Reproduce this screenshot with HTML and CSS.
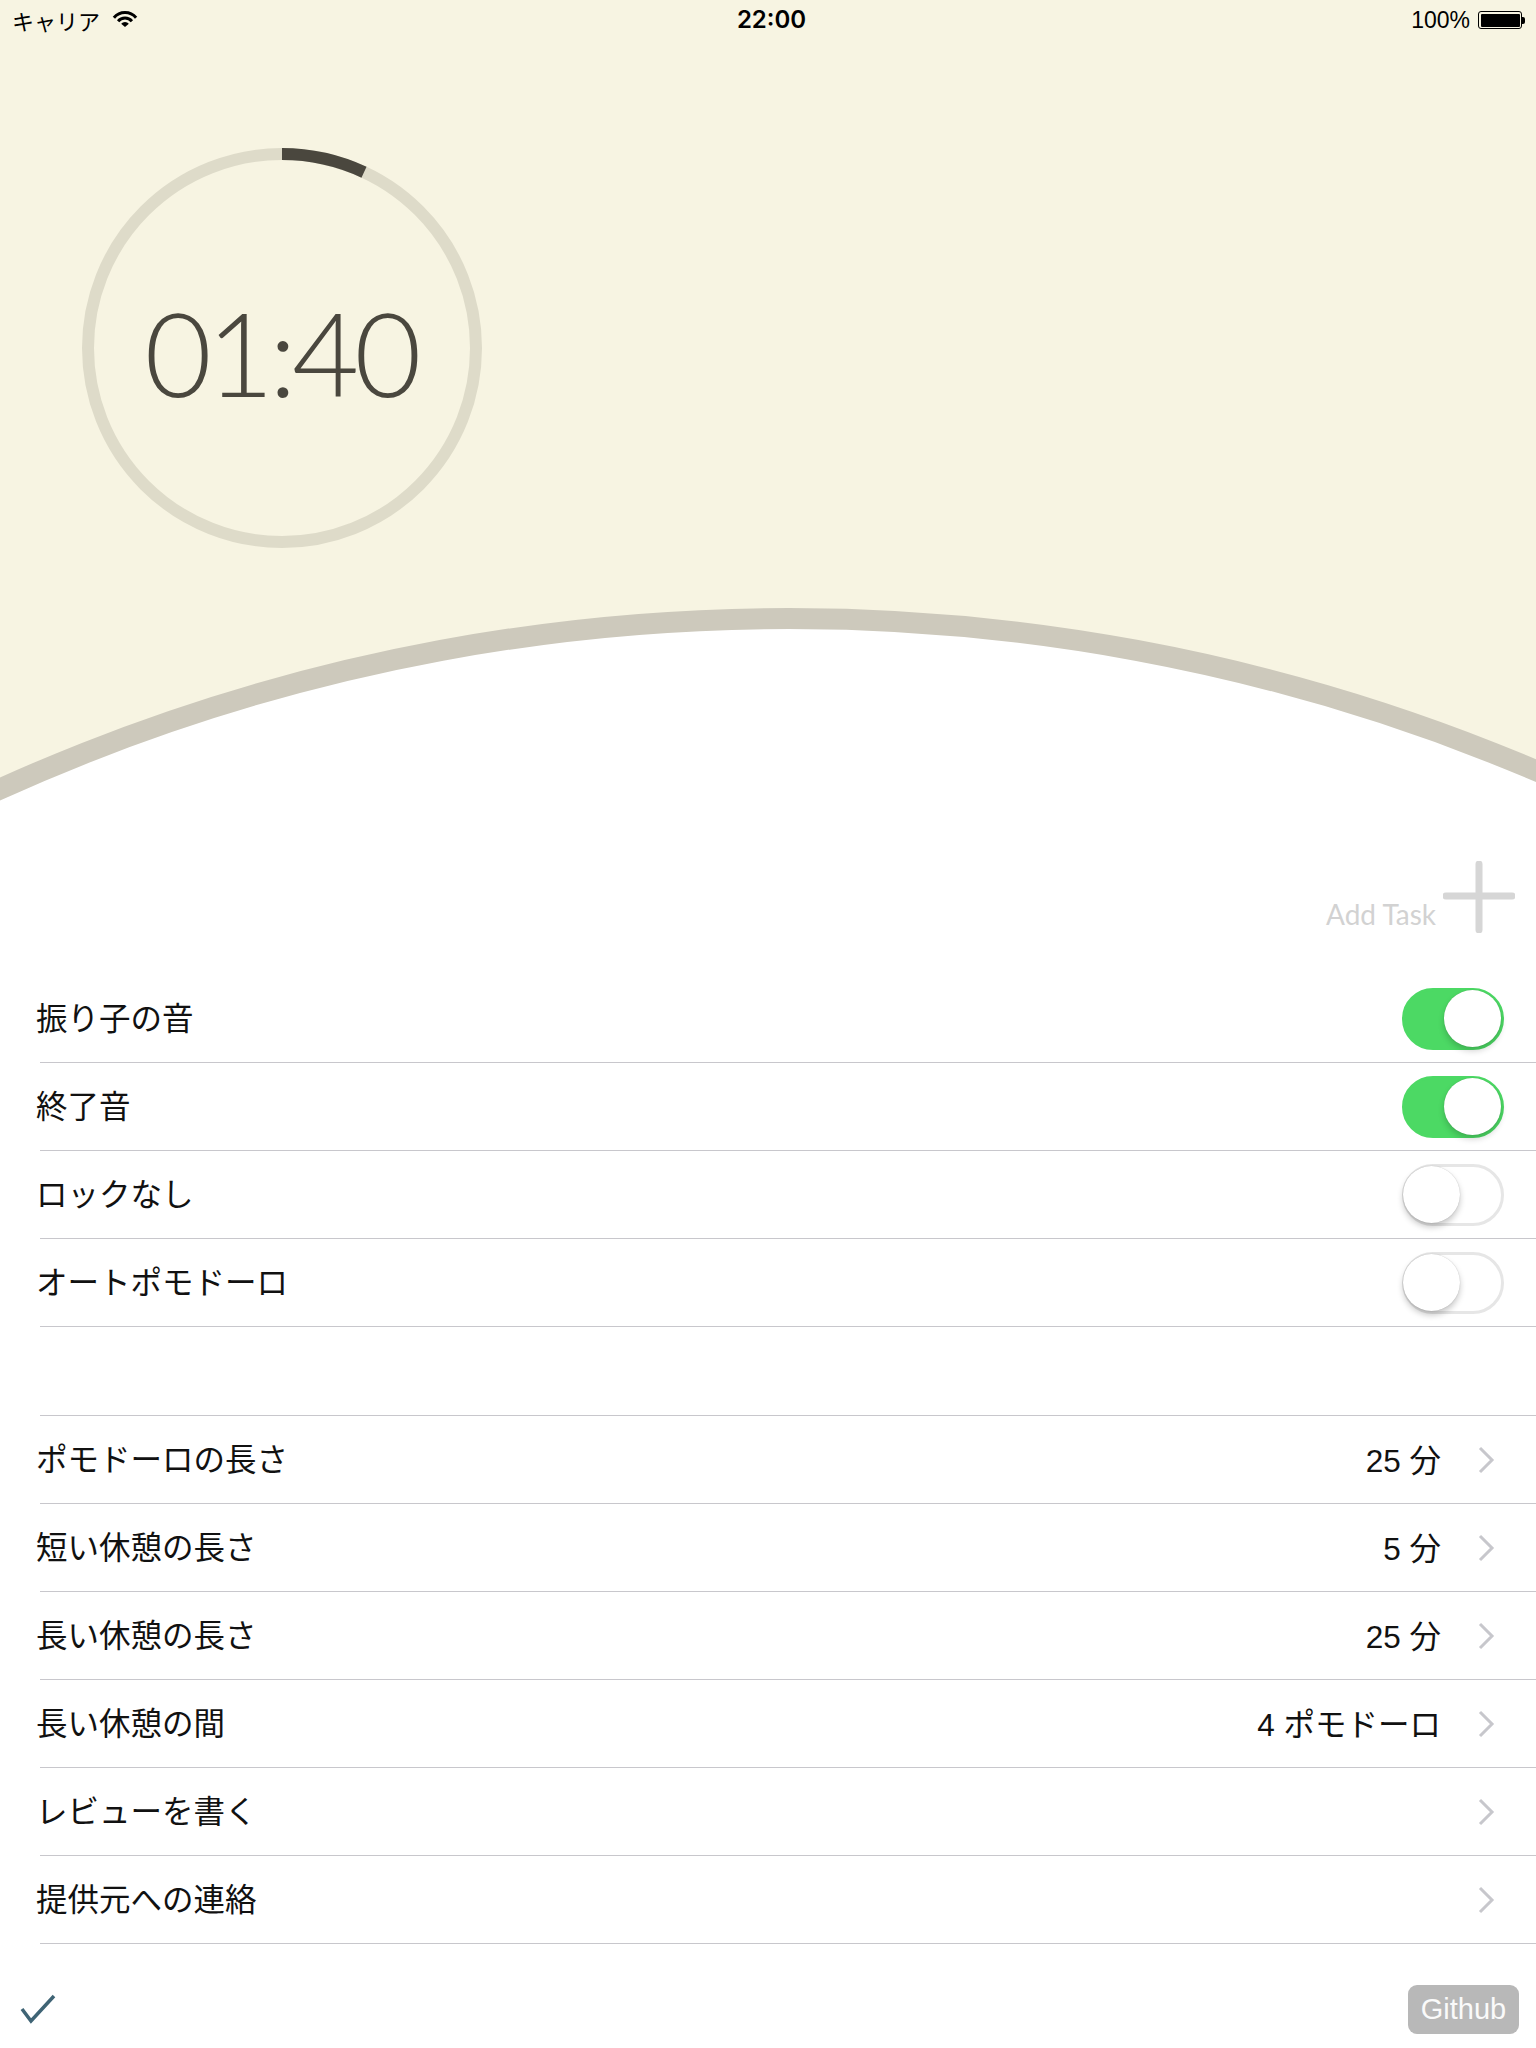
FILE: index.html
```html
<!DOCTYPE html>
<html lang="ja">
<head>
<meta charset="utf-8">
<title>Pomodoro</title>
<link rel="stylesheet" href="styles.css">
</head>
<body>
<div class="screen">
  <div class="statusbar">
    <div class="sb-left">
      <span class="carrier">キャリア</span>
      <svg class="wifi" width="26" height="18" viewBox="0 0 26 18">
        <path d="M1.9 7.68 A14.5 14.5 0 0 1 24.1 7.68" fill="none" stroke="#000" stroke-width="3"/>
        <path d="M6.1 11.21 A9 9 0 0 1 19.9 11.21" fill="none" stroke="#000" stroke-width="3"/>
        <path d="M13 17 L9.17 13.79 A5 5 0 0 1 16.83 13.79 Z" fill="#000"/>
      </svg>
    </div>
    <div class="sb-time">22:00</div>
    <div class="sb-right">
      <span class="pct">100%</span>
      <span class="battery"><span class="battery-fill"></span></span>
      <span class="battery-nub"></span>
    </div>
  </div>

  <div class="hero">
    <div class="dial">
      <svg class="dial-ring" width="400" height="400" viewBox="0 0 400 400">
        <circle cx="200" cy="200" r="194" fill="none" stroke="#dedbc9" stroke-width="12"/>
        <path d="M200 6 A194 194 0 0 1 282 24.2" fill="none" stroke="#4a473e" stroke-width="12"/>
      </svg>
      <div class="dial-time">01:40</div>
    </div>
  </div>

  <div class="sheet">
    <div class="toolbar">
      <span class="add-label">Add Task</span>
      <svg class="plus" width="72" height="72" viewBox="0 0 72 72">
        <path d="M36 3 V69 M3 35 H69" stroke="#d6d6d6" stroke-width="7" stroke-linecap="round" fill="none"/>
      </svg>
    </div>

    <div class="group">
      <div class="row">
        <span class="label">振り子の音</span>
        <span class="switch on"><span class="knob"></span></span>
      </div>
      <div class="row">
        <span class="label">終了音</span>
        <span class="switch on"><span class="knob"></span></span>
      </div>
      <div class="row">
        <span class="label">ロックなし</span>
        <span class="switch"><span class="knob"></span></span>
      </div>
      <div class="row">
        <span class="label">オートポモドーロ</span>
        <span class="switch"><span class="knob"></span></span>
      </div>
    </div>

    <div class="group group-links">
      <div class="row link">
        <span class="label">ポモドーロの長さ</span>
        <span class="value">25 分</span>
        <svg class="chev" width="17" height="28" viewBox="0 0 17 28"><path d="M2 2 L14 14 L2 26" fill="none" stroke="#c7c7cc" stroke-width="3"/></svg>
      </div>
      <div class="row link">
        <span class="label">短い休憩の長さ</span>
        <span class="value">5 分</span>
        <svg class="chev" width="17" height="28" viewBox="0 0 17 28"><path d="M2 2 L14 14 L2 26" fill="none" stroke="#c7c7cc" stroke-width="3"/></svg>
      </div>
      <div class="row link">
        <span class="label">長い休憩の長さ</span>
        <span class="value">25 分</span>
        <svg class="chev" width="17" height="28" viewBox="0 0 17 28"><path d="M2 2 L14 14 L2 26" fill="none" stroke="#c7c7cc" stroke-width="3"/></svg>
      </div>
      <div class="row link">
        <span class="label">長い休憩の間</span>
        <span class="value">4 ポモドーロ</span>
        <svg class="chev" width="17" height="28" viewBox="0 0 17 28"><path d="M2 2 L14 14 L2 26" fill="none" stroke="#c7c7cc" stroke-width="3"/></svg>
      </div>
      <div class="row link">
        <span class="label">レビューを書く</span>
        <span class="value"></span>
        <svg class="chev" width="17" height="28" viewBox="0 0 17 28"><path d="M2 2 L14 14 L2 26" fill="none" stroke="#c7c7cc" stroke-width="3"/></svg>
      </div>
      <div class="row link">
        <span class="label">提供元への連絡</span>
        <span class="value"></span>
        <svg class="chev" width="17" height="28" viewBox="0 0 17 28"><path d="M2 2 L14 14 L2 26" fill="none" stroke="#c7c7cc" stroke-width="3"/></svg>
      </div>
    </div>

    <div class="footer">
      <svg class="check" width="36" height="32" viewBox="0 0 36 32">
        <path d="M2 15 L11 27 L34 2" fill="none" stroke="#3f6475" stroke-width="3.5"/>
      </svg>
      <span class="github">Github</span>
    </div>
  </div>
</div>
</body>
</html>
```

FILE: styles.css
```css
* { box-sizing: border-box; }

html, body {
  margin: 0;
  padding: 0;
}

body {
  font-family: "Liberation Sans", "Noto Sans CJK JP", sans-serif;
  color: #000;
}

.screen {
  width: 1536px;
  height: 2048px;
  overflow: hidden;
  background: #f7f4e2;
  position: relative;
}

/* status bar */
.statusbar {
  height: 40px;
  display: grid;
  grid-template-columns: 1fr auto 1fr;
  align-items: center;
  padding: 0 11px 0 12px;
}

.sb-left {
  display: flex;
  align-items: center;
  gap: 12px;
}

.carrier {
  font-family: "Noto Sans CJK JP", sans-serif;
  font-size: 22px;
  line-height: 1;
}

.wifi { display: block; margin-top: -2px; }

.sb-time {
  font-family: "Inter", "Liberation Sans", sans-serif;
  font-weight: 600;
  font-size: 24px;
  line-height: 1;
  margin-left: 6px;
}

.sb-right {
  display: flex;
  justify-content: flex-end;
  align-items: center;
}

.pct {
  font-family: "Liberation Sans", sans-serif;
  font-size: 23px;
  line-height: 1;
  margin-right: 8px;
}

.battery {
  width: 44px;
  height: 18px;
  border: 1.5px solid #000;
  border-radius: 3px;
  padding: 1.5px;
  display: block;
}

.battery-fill {
  display: block;
  width: 100%;
  height: 100%;
  background: #000;
  border-radius: 1px;
}

.battery-nub {
  width: 3px;
  height: 7px;
  background: #000;
  border-radius: 0 2px 2px 0;
  display: block;
}

/* hero / timer */
.hero {
  height: 568px;
  padding: 108px 0 0 82px;
}

.dial {
  width: 400px;
  height: 400px;
  position: relative;
  display: flex;
  align-items: center;
  justify-content: center;
}

.dial-ring {
  position: absolute;
  left: 0;
  top: 0;
}

.dial-time {
  font-family: "Lato", sans-serif;
  font-weight: 300;
  font-size: 116px;
  line-height: 1;
  color: #4a473e;
  letter-spacing: -5px;
  margin-top: 10px;
  margin-left: -3px;
}

/* lower white sheet with curved top */
.sheet {
  position: relative;
  height: 1440px;
}

.sheet::before {
  content: "";
  position: absolute;
  top: 0;
  left: calc(50% - 1900px);
  width: 3800px;
  height: 3800px;
  border-radius: 50%;
  background: #fff;
  border: 21px solid #cdc9bc;
  z-index: 0;
}

.toolbar, .group, .footer {
  position: relative;
  z-index: 1;
}

.toolbar {
  height: 367px;
  padding: 254px 21px 0 0;
  display: flex;
  justify-content: flex-end;
  align-items: flex-start;
}

.add-label {
  font-family: "Lato", sans-serif;
  font-size: 28px;
  line-height: 28px;
  color: #d2d2d2;
  margin-top: 38px;
  margin-right: 7px;
}

.plus { display: block; margin-top: -1px; }

/* table rows */
.group-links {
  margin-top: 88px;
  border-top: 1px solid #c8c7cc;
  margin-left: 40px;
}

.group-links .row { margin-left: 0; }

.row {
  height: 88px;
  margin-left: 40px;
  border-bottom: 1px solid #c8c7cc;
  display: flex;
  align-items: center;
  padding-right: 32px;
}

.label {
  font-family: "Noto Sans CJK JP", sans-serif;
  font-size: 31.5px;
  margin-left: -4px;
  margin-bottom: 5px;
  flex: 1;
  color: #111;
}

.row.link { padding-right: 41px; }

.value {
  font-family: "Liberation Sans", "Noto Sans CJK JP", sans-serif;
  font-size: 31.5px;
  color: #111;
  margin-right: 37px;
  margin-bottom: 4px;
}

.chev { display: block; }

/* iOS switch */
.switch {
  width: 102px;
  height: 62px;
  border-radius: 31px;
  border: 3px solid #e6e6e6;
  background: #fff;
  position: relative;
  display: flex;
  align-items: center;
}

.switch .knob {
  width: 57px;
  height: 57px;
  border-radius: 50%;
  background: #fff;
  box-shadow: 0 4px 6px rgba(0,0,0,0.22), 0 0 1px rgba(0,0,0,0.25);
  display: block;
  margin-left: -2px;
}

.switch.on {
  background: #4cd964;
  border-color: #4cd964;
  justify-content: flex-end;
}

.switch.on .knob {
  margin-left: 0;
  box-shadow: 0 4px 6px rgba(0,0,0,0.18), 0 0 1px rgba(0,0,0,0.2);
}

/* footer */
.footer {
  display: flex;
  justify-content: space-between;
  align-items: flex-start;
  padding: 41px 17px 0 20px;
}

.check { display: block; margin-top: 9px; }

.github {
  width: 111px;
  height: 49px;
  border-radius: 9px;
  background: #b8b8b8;
  color: #fafafa;
  font-family: "Liberation Sans", sans-serif;
  font-size: 29px;
  display: flex;
  align-items: center;
  justify-content: center;
}
```
